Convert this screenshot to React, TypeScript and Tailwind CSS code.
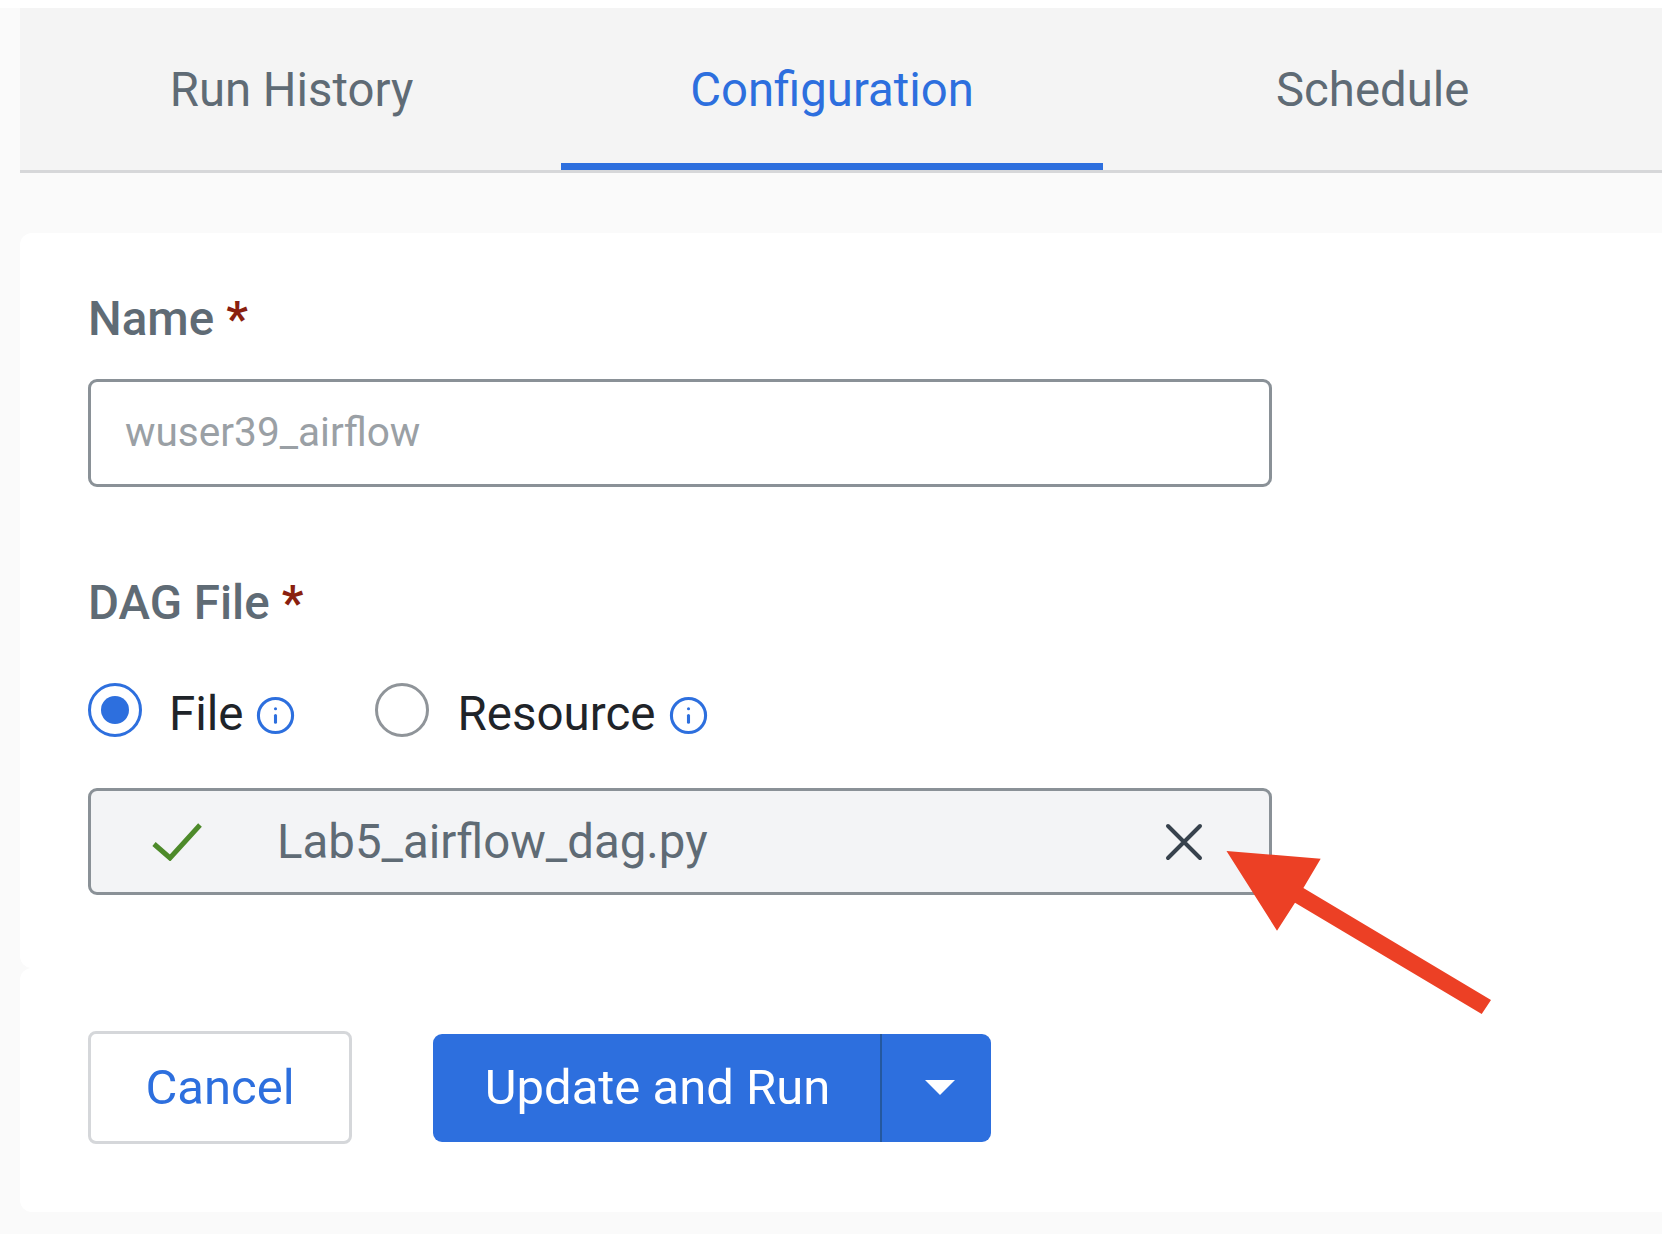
import { Info } from "lucide-react";

function RequiredLabel({ text }: { text: string }) {
  return (
    <div className="flex h-[54px] items-center pt-1 text-[47.5px] font-medium leading-none text-[#5f6b75]">
      {text}
      <span className="ml-3 font-bold text-[#8a1f0f]">*</span>
    </div>
  );
}

function InfoIcon() {
  return <Info className="h-[41px] w-[41px] text-[#2d6fde]" strokeWidth={1.8} />;
}

export default function App() {
  return (
    <div className="relative h-[1234px] w-full overflow-hidden bg-white font-['Roboto',sans-serif]">
      <div className="h-2 bg-white" />
      <div className="h-[1226px] bg-[#fafafa] pl-5">
        {/* Tabs */}
        <div className="flex h-[165px] border-b-[3px] border-[#d6d7d9] bg-[#f4f4f4] text-[47.3px] leading-none">
          <div className="ml-5 flex h-[162px] w-[503px] items-center justify-center pt-1 text-[#5f6b75]">
            Run History
          </div>
          <div className="ml-[18px] flex h-[162px] w-[542px] items-center justify-center border-b-[7px] border-[#2d6fde] pt-[11px] text-[#2d6fde]">
            Configuration
          </div>
          <div className="ml-[173px] flex h-[162px] items-center pt-1 text-[#5f6b75]">
            Schedule
          </div>
        </div>

        <div className="h-[60px]" />

        {/* Form card */}
        <div className="h-[735px] rounded-l-[12px] bg-white pl-[68px] pt-[58px]">
          <RequiredLabel text="Name" />
          <div className="mt-[34px] flex h-[108px] w-[1184px] items-center rounded-[9px] border-[3px] border-[#8a9197] pb-[2px] pl-[34px] text-[40.6px] text-[#9aa0a5]">
            wuser39_airflow
          </div>

          <div className="mt-[88px]">
            <RequiredLabel text="DAG File" />
          </div>

          <div className="mt-[54px] flex h-[53px] items-center text-[47.5px] leading-none text-[#1f2429]">
            <div className="flex h-[54px] w-[54px] items-center justify-center rounded-full border-[3px] border-[#2d6fde]">
              <div className="h-7 w-7 rounded-full bg-[#2d6fde]" />
            </div>
            <span className="ml-[27px] mt-[10px]">File</span>
            <span className="ml-[11px] mt-3">
              <InfoIcon />
            </span>
            <div className="ml-[79px] h-[54px] w-[54px] rounded-full border-[3px] border-[#8f9499]" />
            <span className="ml-[29px] mt-[10px]">Resource</span>
            <span className="ml-[12px] mt-3">
              <InfoIcon />
            </span>
          </div>

          <div className="mt-[52px] flex h-[107px] w-[1184px] items-center rounded-[9px] border-[3px] border-[#8a9197] bg-[#f3f4f6] pl-[61px] pr-[66px] text-[47.4px] text-[#5f6b75]">
            <svg width="50" height="38" viewBox="0 0 50 38" fill="none" className="shrink-0">
              <path d="M2 21 L18 35 L48 2" stroke="#4d8a2a" strokeWidth="5" />
            </svg>
            <span className="ml-[75px] flex-1 pt-[3px]">Lab5_airflow_dag.py</span>
            <svg width="38" height="38" viewBox="0 0 38 38" fill="none" className="shrink-0">
              <path d="M3 3 L35 35 M35 3 L3 35" stroke="#37424d" strokeWidth="4" strokeLinecap="round" />
            </svg>
          </div>
        </div>

        {/* Actions card */}
        <div className="h-[244px] rounded-l-[12px] bg-white pl-[68px] pt-[63px]">
          <div className="flex h-[113px] items-center">
            <div className="flex h-[113px] w-[264px] items-center justify-center rounded-[8px] border-[3px] border-[#d5d7da] text-[49px] text-[#2d6fde]">
              Cancel
            </div>
            <div className="ml-[81px] flex h-[108px] w-[558px] rounded-[9px] bg-[#2d6fde] text-[49px] text-white">
              <div className="flex w-[449px] items-center justify-center border-r-[2px] border-[#24589f] pl-[2px]">
                Update and Run
              </div>
              <div className="flex flex-1 items-center justify-center pl-[6px]">
                <svg width="30" height="15" viewBox="0 0 30 15" fill="#ffffff">
                  <path d="M0 0 H30 L15 15 Z" />
                </svg>
              </div>
            </div>
          </div>
        </div>
      </div>

      {/* Red annotation arrow */}
      <svg className="absolute left-[1220px] top-[845px]" width="280" height="175" viewBox="1220 845 280 175" fill="#ec4025">
        <path d="M1226.5 851 L1320.7 858.7 L1303.4 888 L1491 1000 L1481.7 1014 L1295 902.7 L1277 930.7 Z" />
      </svg>
    </div>
  );
}
